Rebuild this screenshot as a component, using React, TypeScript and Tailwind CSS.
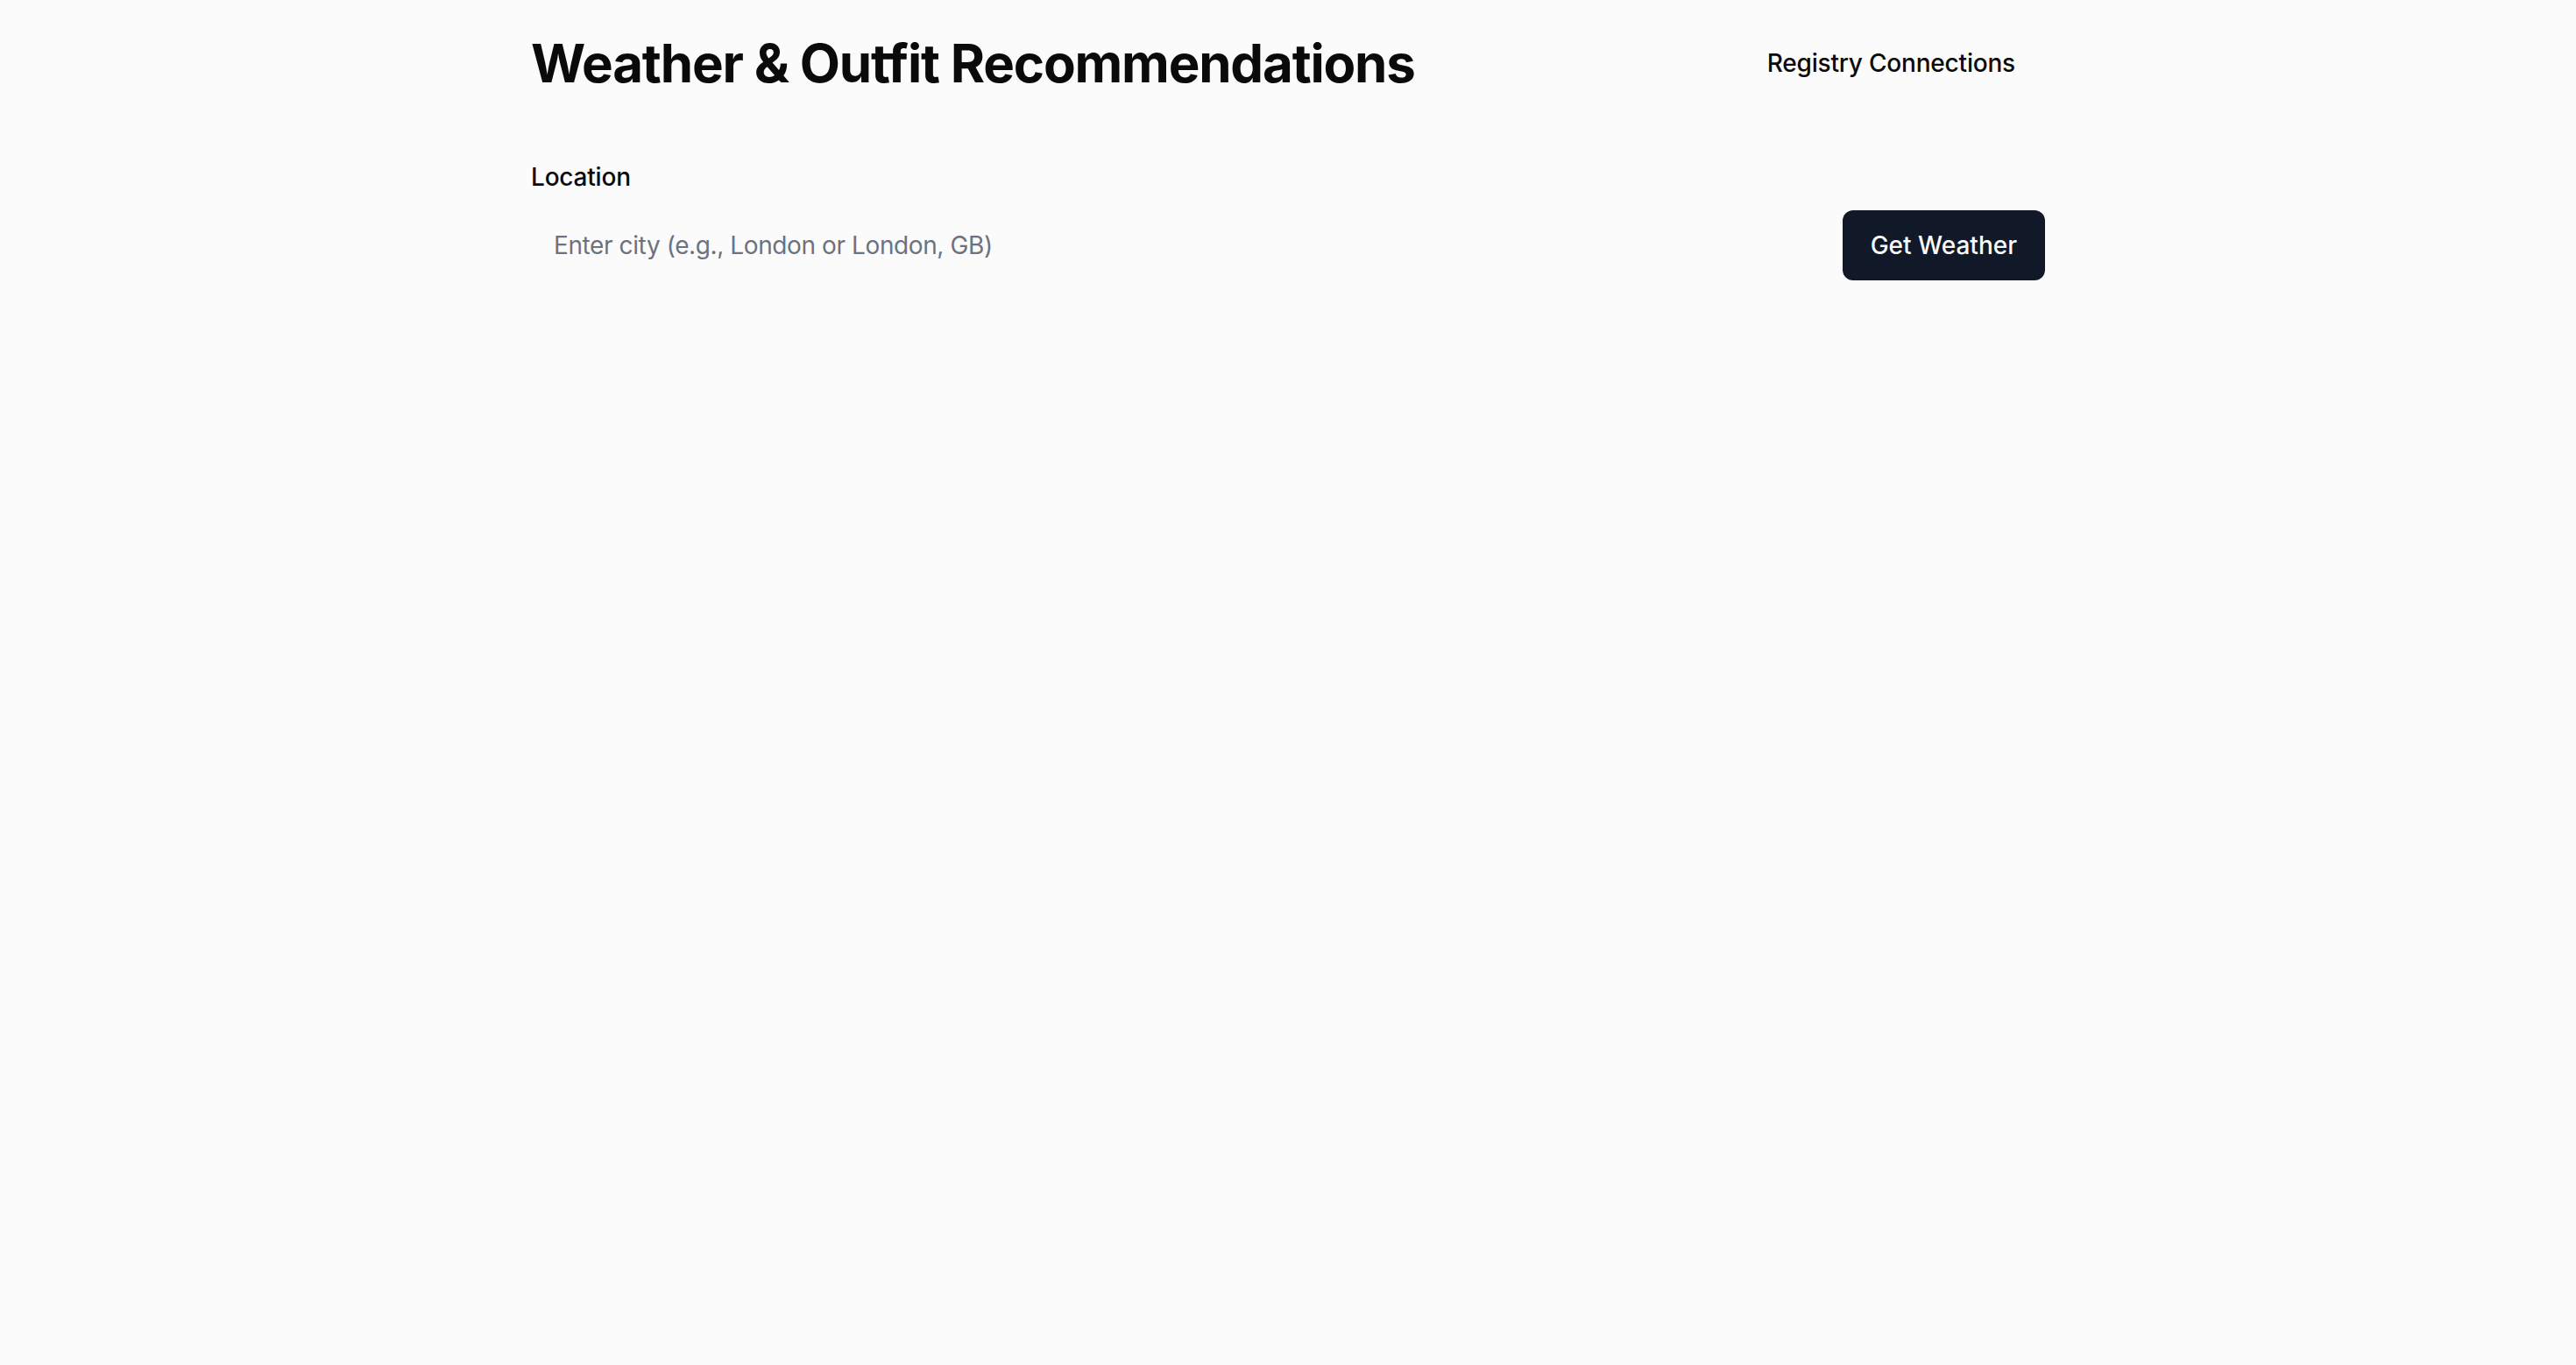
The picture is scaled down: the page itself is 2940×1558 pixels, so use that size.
import React from "react";

export default function App() {
  return (
    <div
      className="min-h-screen w-full bg-[#fbfbfc] text-[#0a0a0a]"
      style={{ fontFamily: "Inter, 'Noto Sans', sans-serif" }}
    >
      <div className="mx-auto w-[1792px] px-[32px]">
        <header className="flex items-center justify-between pt-[32px]">
          <h1 className="text-[60px] font-bold leading-[72px] tracking-[-1.2px]">
            Weather &amp; Outfit Recommendations
          </h1>
          <button className="flex h-[80px] items-center rounded-[12px] px-[34px] text-[28px] font-medium leading-[40px] tracking-[-0.2px] text-[#0a0a0a]">
            Registry Connections
          </button>
        </header>
        <main className="mt-[70px]">
          <label className="block text-[28px] font-medium leading-[40px] tracking-[-0.2px] text-[#0a0a0a]">
            Location
          </label>
          <div className="mt-[18px] flex gap-[16px]">
            <input
              type="text"
              placeholder="Enter city (e.g., London or London, GB)"
              className="h-[80px] flex-1 rounded-[12px] border-2 border-transparent bg-transparent px-[24px] text-[28px] tracking-[-0.4px] outline-none placeholder:text-[#6b7280]"
            />
            <button className="h-[80px] rounded-[12px] bg-[#111827] px-[32px] text-[28px] font-medium text-[#f9fafb]">
              Get Weather
            </button>
          </div>
        </main>
      </div>
    </div>
  );
}
